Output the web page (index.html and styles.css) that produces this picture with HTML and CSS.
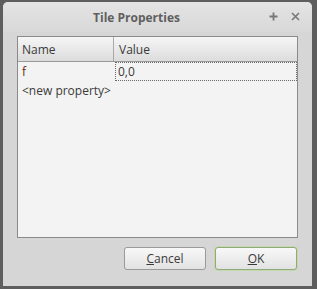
FILE: index.html
```html
<!DOCTYPE html>
<html lang="en">
<head>
    <meta charset="UTF-8">
    <title>Tile Properties</title>
    <link rel="stylesheet" href="styles.css">
</head>
<body>

<div class="window">
    <div class="titlebar">
        <span class="title">Tile Properties</span>
        <span class="controls">
            <svg width="11" height="11" viewBox="0 0 11 11"><path d="M5.5 1.5v8M1.5 5.5h8" stroke="#777" stroke-width="1.8"/></svg>
            <svg width="11" height="11" viewBox="0 0 11 11"><path d="M2 2l7 7M9 2l-7 7" stroke="#777" stroke-width="1.6"/></svg>
        </span>
    </div>

    <div class="content">
        <div class="panel">
            <div class="row header">
                <div class="cell name">Name</div>
                <div class="cell value">Value</div>
            </div>
            <div class="row">
                <div class="cell name modified">f</div>
                <div class="cell value focus">0,0</div>
            </div>
            <div class="row">
                <div class="cell name">&lt;new property&gt;</div>
            </div>
        </div>

        <div class="buttons">
            <button class="btn"><u>C</u>ancel</button>
            <button class="btn default"><u>O</u>K</button>
        </div>
    </div>
</div>

</body>
</html>
```

FILE: styles.css
```css
body {
    margin: 0;
    background-color: #5e5e5e;
    font-family: "Open Sans", "Noto Sans", sans-serif;
    font-size: 12px;
    color: #3a3a3a;
}
.window {
    margin: 2px 0 0 3px;
    width: 309px;
    height: 284px;
    background-color: #d6d6d6;
    border-radius: 5px 5px 0 0;
    display: flex;
    flex-direction: column;
    box-sizing: border-box;
}
.titlebar {
    height: 30px;
    display: flex;
    align-items: center;
    justify-content: center;
    position: relative;
    padding-right: 42px;
    background: linear-gradient(#e4e4e4, #d8d8d8);
    border-radius: 5px 5px 0 0;
}
.title {
    font-weight: bold;
    font-size: 12px;
    color: #5f5f5f;
}
.controls {
    position: absolute;
    right: 11px;
    top: 9px;
    display: flex;
    gap: 11px;
}
.content {
    flex: 1;
    padding: 4px 14px 16px 14px;
    display: flex;
    flex-direction: column;
}
.panel {
    height: 202px;
    box-sizing: border-box;
    border: 1px solid #8a8a8a;
    background-color: #f3f3f3;
}
.row {
    display: flex;
    height: 19px;
    align-items: center;
}
.row.header {
    height: 25px;
    background: linear-gradient(#f6f6f6, #dcdcdc);
    border-bottom: 1px solid #999;
    box-sizing: border-box;
}
.cell {
    padding-left: 4px;
    box-sizing: border-box;
    height: 100%;
    display: flex;
    align-items: center;
}
.cell.name {
    width: 96px;
}
.header .cell.name {
    border-right: 1px solid #aaa;
}
.cell.value {
    flex: 1;
}
.header .cell.value {
    padding-left: 5px;
}
.modified {
    color: #6a2e0c;
}
.focus {
    border: 1px dotted #6a6a6a;
    margin-left: 1px;
    margin-top: -1px;
    height: 19px;
    padding-left: 2px;
}
.buttons {
    display: flex;
    justify-content: flex-end;
    gap: 9px;
    margin-top: 9px;
    padding-right: 1px;
}
.btn {
    width: 82px;
    height: 23px;
    font-family: "Open Sans", "Noto Sans", sans-serif;
    font-size: 12px;
    color: #3a3a3a;
    background: linear-gradient(#f8f8f8, #e2e2e2);
    border: 1px solid #9a9a9a;
    border-radius: 3px;
    padding: 0;
}
.btn.default {
    border-color: #8fa97a;
    box-shadow: 0 0 0 1px #c5d9b0;
}
```
